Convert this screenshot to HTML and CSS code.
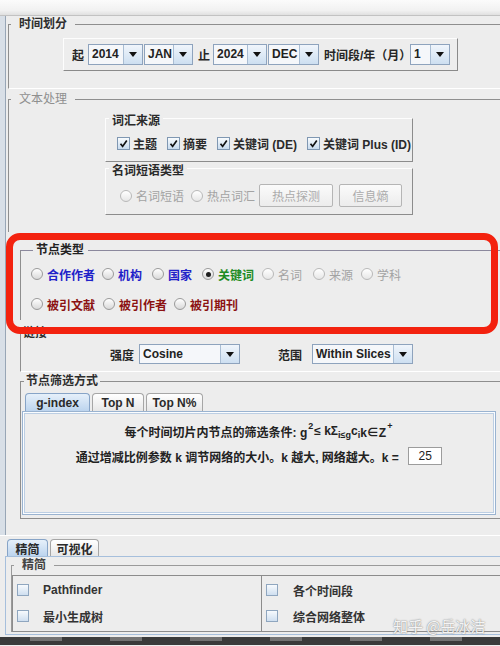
FILE: index.html
```html
<!DOCTYPE html>
<html lang="zh">
<head>
<meta charset="utf-8">
<title>CiteSpace</title>
<link rel="stylesheet" href="styles.css">
</head>
<body>
<div class="topbar"></div>
<div class="upper">
  <div class="rail"></div>
  <div class="content">
    <fieldset class="grp g-time">
      <legend>时间划分</legend>
      <div class="timebox">
        <span>起</span>
        <div class="combo w-year sp4"><span class="val">2014</span><span class="arr"><svg width="8" height="5" viewBox="0 0 8 5"><path d="M0 0H8L4 5Z" fill="#111"/></svg></span></div>
        <div class="combo w-jan sp1"><span class="val">JAN</span><span class="arr"><svg width="8" height="5" viewBox="0 0 8 5"><path d="M0 0H8L4 5Z" fill="#111"/></svg></span></div>
        <span class="sp5">止</span>
        <div class="combo w-year2 sp3"><span class="val">2024</span><span class="arr"><svg width="8" height="5" viewBox="0 0 8 5"><path d="M0 0H8L4 5Z" fill="#111"/></svg></span></div>
        <div class="combo w-dec sp1"><span class="val">DEC</span><span class="arr"><svg width="8" height="5" viewBox="0 0 8 5"><path d="M0 0H8L4 5Z" fill="#111"/></svg></span></div>
        <span class="sp5 step-lbl">时间段/年（月）</span>
        <div class="combo w-step"><span class="val">1</span><span class="arr"><svg width="8" height="5" viewBox="0 0 8 5"><path d="M0 0H8L4 5Z" fill="#111"/></svg></span></div>
      </div>
    </fieldset>

    <fieldset class="grp g-text">
      <legend>文本处理</legend>
      <fieldset class="box box-src">
        <legend>词汇来源</legend>
        <div class="chkrow">
          <label class="chk"><span class="cb on"><svg width="9" height="9" viewBox="0 0 9 9"><path d="M1.5 4.8L3.6 7.4L7.8 1.4" fill="none" stroke="#111" stroke-width="1.7"/></svg></span>主题</label>
          <label class="chk"><span class="cb on"><svg width="9" height="9" viewBox="0 0 9 9"><path d="M1.5 4.8L3.6 7.4L7.8 1.4" fill="none" stroke="#111" stroke-width="1.7"/></svg></span>摘要</label>
          <label class="chk"><span class="cb on"><svg width="9" height="9" viewBox="0 0 9 9"><path d="M1.5 4.8L3.6 7.4L7.8 1.4" fill="none" stroke="#111" stroke-width="1.7"/></svg></span>关键词 (DE)</label>
          <label class="chk"><span class="cb on"><svg width="9" height="9" viewBox="0 0 9 9"><path d="M1.5 4.8L3.6 7.4L7.8 1.4" fill="none" stroke="#111" stroke-width="1.7"/></svg></span>关键词 Plus (ID)</label>
        </div>
      </fieldset>
      <fieldset class="box box-np">
        <legend>名词短语类型</legend>
        <div class="nprow">
          <label class="opt dis"><span class="radio"></span>名词短语</label>
          <label class="opt dis"><span class="radio"></span>热点词汇</label>
          <div class="btn b-detect">热点探测</div>
          <div class="btn b-entropy">信息熵</div>
        </div>
      </fieldset>
    </fieldset>

    <fieldset class="grp g-node">
      <legend>节点类型</legend>
      <div class="noderow row-a">
        <label class="opt blue"><span class="radio"></span>合作作者</label>
        <label class="opt blue"><span class="radio"></span>机构</label>
        <label class="opt blue"><span class="radio"></span>国家</label>
        <label class="opt green"><span class="radio sel"></span>关键词</label>
        <label class="opt dis"><span class="radio"></span>名词</label>
        <label class="opt dis"><span class="radio"></span>来源</label>
        <label class="opt dis"><span class="radio"></span>学科</label>
      </div>
      <div class="noderow row-b">
        <label class="opt red"><span class="radio"></span>被引文献</label>
        <label class="opt red"><span class="radio"></span>被引作者</label>
        <label class="opt red"><span class="radio"></span>被引期刊</label>
      </div>
    </fieldset>

    <fieldset class="grp g-link">
      <legend>链接</legend>
      <div class="linkrow">
        <span>强度</span>
        <div class="combo w-link sp5"><span class="val">Cosine</span><span class="arr"><svg width="8" height="5" viewBox="0 0 8 5"><path d="M0 0H8L4 5Z" fill="#111"/></svg></span></div>
        <span class="range-lbl">范围</span>
        <div class="combo w-link sp10"><span class="val">Within Slices</span><span class="arr"><svg width="8" height="5" viewBox="0 0 8 5"><path d="M0 0H8L4 5Z" fill="#111"/></svg></span></div>
      </div>
    </fieldset>

    <fieldset class="grp g-filter">
      <legend>节点筛选方式</legend>
      <div class="tabs ftabs">
        <div class="tab on t-g">g-index</div>
        <div class="tab t-n">Top N</div>
        <div class="tab t-p">Top N%</div>
      </div>
      <div class="tabpanel">
        <div class="fline">每个时间切片内节点的筛选条件: g<span class="sup">2</span>≤ kΣ<span class="sub">i≤g</span>c<span class="sub">i</span>k∈Z<span class="sup">+</span></div>
        <div class="fline fline2">通过增减比例参数 k 调节网络的大小。k 越大, 网络越大。k = <span class="kinput">25</span></div>
      </div>
    </fieldset>
  </div>
</div>

<div class="lower">
  <div class="tabs ltabs">
    <div class="tab on t-jj">精简</div>
    <div class="tab t-vis">可视化</div>
  </div>
  <div class="lpanel">
    <fieldset class="grp g-jj">
      <legend>精简</legend>
      <div class="inner">
        <div class="col">
          <label class="copt"><span class="cb2"></span>Pathfinder</label>
          <label class="copt"><span class="cb2"></span>最小生成树</label>
        </div>
        <div class="col col2">
          <label class="copt"><span class="cb2"></span>各个时间段</label>
          <label class="copt"><span class="cb2"></span>综合网络整体</label>
        </div>
      </div>
    </fieldset>
  </div>
  <div class="status"></div>
</div>

<div class="highlight"></div>
<div class="watermark">知乎 @岳冰洁</div>
</body>
</html>
```
FILE: styles.css
```css
* { box-sizing: border-box; }
html, body { margin: 0; padding: 0; }
body {
  width: 500px;
  height: 646px;
  overflow: hidden;
  position: relative;
  background: #ededed;
  font-family: "Liberation Sans", "Noto Sans CJK SC", sans-serif;
  font-size: 12px;
  font-weight: bold;
  color: #262626;
}
label { cursor: default; }

.topbar {
  height: 16px;
  background: linear-gradient(#fbfbfb, #f1f1f1 70%, #e0e0e0);
  border-bottom: 1px solid #c2c2c2;
}

.upper {
  display: flex;
  height: 520px;
  border-bottom: 1px solid #ffffff;
}
.rail {
  flex: none;
  width: 6px;
  background: #d8dfe7;
  border-right: 1px solid #98a6b6;
}
.content { flex: 1; min-width: 0; }

/* titled groups */
.grp {
  margin: 0;
  padding: 0;
  min-width: 0;
  border: none;
  border-top: 1px solid #8e8e8e;
  border-left: 1px solid #8e8e8e;
}
.grp > legend {
  margin-left: 2px;
  padding: 0 8px;
  height: 14px;
  line-height: 14px;
  color: #2e2e2e;
}

.g-time { margin: 1px 0 0 2px; padding-bottom: 17px; border-bottom: 1px solid #ffffff; }
.g-text { margin: 3px 0 0 2px; padding-bottom: 17px; }
.g-text > legend { color: #8f8f8f; font-weight: normal; }

.timebox {
  display: flex;
  align-items: center;
  width: 395px;
  height: 33px;
  margin: 7px 0 0 54px;
  padding-left: 8px;
  border: 1px solid;
  border-color: #fdfdfd #8a8a8a #8a8a8a #fdfdfd;
}
.sp1 { margin-left: 1px; }
.sp3 { margin-left: 3px; }
.sp4 { margin-left: 4px; }
.sp5 { margin-left: 5px; }
.sp10 { margin-left: 10px; }
.step-lbl { width: 86px; white-space: nowrap; }

/* combo boxes */
.combo {
  display: flex;
  height: 21px;
  border: 1px solid #8ea3bd;
  background: #f5f7fa;
}
.combo .val {
  flex: 1;
  padding-left: 3px;
  line-height: 19px;
  color: #222;
  white-space: nowrap;
  overflow: hidden;
}
.combo .arr {
  flex: none;
  width: 19px;
  display: flex;
  align-items: center;
  justify-content: center;
  border-left: 1px solid #a9bdd3;
  background: linear-gradient(#f0f5fb, #cddff1);
}
.w-year { width: 55px; }
.w-year2 { width: 54px; }
.w-jan { width: 49px; }
.w-dec { width: 51px; }
.w-step { width: 40px; }
.w-link { width: 101px; height: 20px; }
.w-link .val { line-height: 18px; }

/* raised boxes inside text processing */
.box {
  margin: 2px 0 0 96px;
  padding: 0;
  width: 308px;
  min-width: 0;
  border: 1px solid;
  border-color: #fdfdfd #8c8c8c #8c8c8c #fdfdfd;
}
.box > legend {
  margin-left: 3px;
  padding: 6px 3px 0;
  line-height: 14px;
  color: #2a2a2a;
}
.box-np { margin-top: -4px; }

.chkrow {
  display: flex;
  align-items: center;
  gap: 10px;
  height: 16px;
  margin: 7px 0 10px 11px;
}
.chk {
  display: flex;
  align-items: center;
  gap: 3px;
  white-space: nowrap;
  color: #2a2a2a;
}
.cb {
  width: 13px;
  height: 13px;
  display: flex;
  align-items: center;
  justify-content: center;
  border: 1px solid #7f97b2;
  background: linear-gradient(#f8fbfd, #c8dbee);
}

.nprow {
  display: flex;
  align-items: center;
  height: 23px;
  margin: 6px 0 7px 14px;
}
.nprow .opt + .opt { margin-left: 7px; }
.btn {
  height: 23px;
  display: flex;
  align-items: center;
  justify-content: center;
  border: 1px solid #b5b5b5;
  border-radius: 2px;
  background: linear-gradient(#fbfbfb, #ececec);
  color: #ababab;
  font-weight: normal;
}
.b-detect { width: 74px; margin-left: 4px; }
.b-entropy { width: 63px; margin-left: 6px; }

/* radio options */
.opt {
  display: flex;
  align-items: center;
  gap: 4px;
  white-space: nowrap;
}
.radio {
  flex: none;
  width: 12px;
  height: 12px;
  border-radius: 50%;
  border: 1px solid #9a9a9a;
  background: linear-gradient(#ffffff, #d9d9d9);
  display: flex;
  align-items: center;
  justify-content: center;
}
.radio.sel::after {
  content: "";
  width: 5px;
  height: 5px;
  border-radius: 50%;
  background: #1e1e1e;
}
.dis { color: #a3a3a3; font-weight: normal; }
.dis .radio { border-color: #b9b9b9; background: linear-gradient(#ffffff, #e6e6e6); }
.blue { color: #1f22c9; }
.green { color: #1e8c24; }
.red { color: #8c1212; }

/* node types */
.g-node { margin: 11px 0 0 14px; padding: 7px 0 6px 10px; border-top-color: #8b889d; }
.g-node > legend { color: #222; padding: 0 4px 0 3px; }
.noderow { display: grid; align-items: center; height: 20px; }
.row-a { grid-template-columns: 71px 50px 50px 60px 51px 48px auto; }
.row-b { grid-template-columns: 72px 71px auto; margin-top: 10px; }

/* links */
.g-link { margin: 6px 0 0 14px; padding: 4px 0 7px 0; border-top-color: transparent; border-bottom: 1px solid #ffffff; }
.g-link > legend { padding: 0 4px 0 0; }
.linkrow {
  display: flex;
  align-items: center;
  height: 20px;
  padding-left: 89px;
}
.range-lbl { margin-left: 38px; }

/* node filter */
.g-filter { margin: 2px 0 0 14px; padding: 5px 4px 3px 1px; border-bottom: 1px solid #8e8e8e; }
.g-filter > legend { padding: 0 2px 0 2px; }
.tabs { display: flex; align-items: flex-end; }
.ftabs { margin-left: 3px; gap: 2px; }
.tab {
  height: 18px;
  display: flex;
  align-items: center;
  justify-content: center;
  border: 1px solid #a6a6a6;
  border-bottom: none;
  border-radius: 4px 4px 0 0;
  background: linear-gradient(#ffffff, #e7e7e7);
  color: #2a2a2a;
  font-size: 12px;
  white-space: nowrap;
}
.tab.on {
  border-color: #87a4c7;
  background: linear-gradient(#e6f0fa, #bcd4ee);
}
.t-g { width: 65px; }
.t-n { width: 52px; }
.t-p { width: 57px; }
.tabpanel {
  height: 104px;
  border: 1px solid #9ab3d0;
  box-shadow: inset 0 0 0 1px #fbfdff, inset 0 0 0 2px #bccee3;
  padding-top: 10px;
}
.fline {
  display: flex;
  align-items: center;
  justify-content: center;
  height: 18px;
  white-space: pre;
  color: #222;
}
.fline2 { margin-top: 7px; }
.sup { font-size: 9px; position: relative; top: -5px; margin: 0 1px; }
.sub { font-size: 9px; position: relative; top: 4px; }
.kinput {
  width: 34px;
  height: 18px;
  margin-left: 6px;
  display: flex;
  align-items: center;
  justify-content: center;
  border: 1px solid #9c9c9c;
  background: #ffffff;
  font-weight: normal;
  color: #222;
}

/* lower panel */
.lower { padding: 3px 0 0 5px; }
.ltabs { margin-left: 2px; gap: 2px; }
.t-jj { width: 41px; height: 17px; }
.t-vis { width: 49px; height: 17px; }
.lpanel {
  height: 79px;
  border: 1px solid #a6bfdc;
  border-right: none;
}
.g-jj { margin: 1px 0 0 5px; border-top-color: #9a9a9a; border-left-color: #9a9a9a; }
.g-jj > legend { color: #444; }
.inner {
  display: grid;
  grid-template-columns: 248px 1fr;
  height: 57px;
  margin-top: 3px;
  border-top: 1px solid #8c8c8c;
  border-left: 1px solid #8c8c8c;
  border-bottom: 1px solid #8c8c8c;
}
.col {
  display: flex;
  flex-direction: column;
  gap: 14px;
  padding: 8px 0 0 4px;
}
.col2 { border-left: 1px solid #8c8c8c; padding-left: 4px; }
.copt {
  display: flex;
  align-items: center;
  height: 12px;
  gap: 14px;
  color: #333;
  white-space: nowrap;
}
.col2 .copt { gap: 15px; }
.cb2 {
  flex: none;
  width: 12px;
  height: 12px;
  border: 1px solid #8fa6bf;
  background: linear-gradient(#f7fafd, #cfdff0);
}

.status {
  margin: 2px 0 0 -5px;
  height: 8px;
  background:
    repeating-linear-gradient(90deg, transparent 0 30px, rgba(220,220,220,0.35) 30px 62px, transparent 62px 80px) 0 0 / 100% 4px no-repeat,
    #3a3a3a;
}

/* overlays */
.highlight {
  position: absolute;
  left: 6px;
  top: 233px;
  width: 492px;
  height: 101px;
  border: 7px solid #f3220f;
  border-radius: 14px;
  pointer-events: none;
}
.watermark {
  position: absolute;
  left: 393px;
  top: 615px;
  font-family: "Noto Sans CJK SC", sans-serif;
  font-size: 15px;
  font-weight: normal;
  color: rgba(255, 255, 255, 0.92);
  text-shadow: 0 0 1px #8a8a8a, 0 0 2px #9a9a9a;
  white-space: nowrap;
}
```
